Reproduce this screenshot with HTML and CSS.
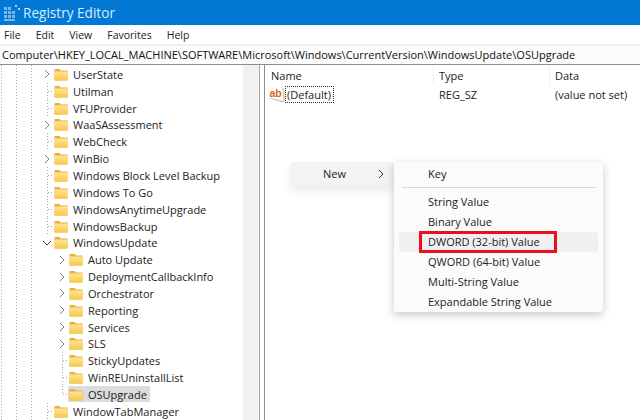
FILE: index.html
```html
<!DOCTYPE html>
<html lang="en">
<head>
<meta charset="utf-8">
<title>Registry Editor</title>
<link rel="stylesheet" href="styles.css">
</head>
<body>
<svg class="defs" width="0" height="0" aria-hidden="true">
  <defs>
    <linearGradient id="fg" x1="0" y1="0" x2="0" y2="1"><stop offset="0" stop-color="#ffe596"/><stop offset="1" stop-color="#f8c948"/></linearGradient>
    <symbol id="folder" viewBox="0 0 14 13">
      <path d="M0.5 1h5l1.5 1.5h6.5v10h-13z" fill="#e9b23c"/>
      <path d="M0.5 3.5h13v9h-13z" fill="url(#fg)"/>
    </symbol>
    <symbol id="right" viewBox="0 0 8 10"><path d="M2 1l4 4-4 4" fill="none" stroke="#808080" stroke-width="1"/></symbol>
  </defs>
</svg>
<div class="window">
  <header class="titlebar">
    <svg class="appicon" width="16" height="16" viewBox="0 0 16 16">
      <g fill="#7fb6e6"><rect x="0" y="2" width="3" height="3"/><rect x="0" y="6" width="3" height="3"/><rect x="0" y="10" width="3" height="3"/><rect x="4" y="2" width="3" height="3"/><rect x="4" y="6" width="3" height="3"/><rect x="4" y="10" width="3" height="3"/><rect x="8" y="6" width="3" height="3"/><rect x="8" y="10" width="3" height="3"/><rect x="0" y="14" width="11" height="2"/></g>
      <g fill="#a9cfef"><rect x="11" y="0" width="2" height="2"/><rect x="14" y="3" width="2" height="2"/></g>
    </svg>
    <span class="title">Registry Editor</span>
  </header>
  <nav class="menubar"><span>File</span><span>Edit</span><span>View</span><span>Favorites</span><span>Help</span></nav>
  <div class="address">Computer\HKEY_LOCAL_MACHINE\SOFTWARE\Microsoft\Windows\CurrentVersion\WindowsUpdate\OSUpgrade</div>
  <main class="panes">
    <section class="tree">
      <ul class="rows">
        <li class="row l1 arrow"><svg class="chev"><use href="#right"/></svg><svg class="fold"><use href="#folder"/></svg><span>UserState</span></li>
        <li class="row l1 leaf"><svg class="fold"><use href="#folder"/></svg><span>Utilman</span></li>
        <li class="row l1 leaf"><svg class="fold"><use href="#folder"/></svg><span>VFUProvider</span></li>
        <li class="row l1 arrow"><svg class="chev"><use href="#right"/></svg><svg class="fold"><use href="#folder"/></svg><span>WaaSAssessment</span></li>
        <li class="row l1 leaf"><svg class="fold"><use href="#folder"/></svg><span>WebCheck</span></li>
        <li class="row l1 arrow"><svg class="chev"><use href="#right"/></svg><svg class="fold"><use href="#folder"/></svg><span>WinBio</span></li>
        <li class="row l1 leaf"><svg class="fold"><use href="#folder"/></svg><span>Windows Block Level Backup</span></li>
        <li class="row l1 leaf"><svg class="fold"><use href="#folder"/></svg><span>Windows To Go</span></li>
        <li class="row l1 leaf"><svg class="fold"><use href="#folder"/></svg><span>WindowsAnytimeUpgrade</span></li>
        <li class="row l1 leaf"><svg class="fold"><use href="#folder"/></svg><span>WindowsBackup</span></li>
        <li class="row l1 arrow"><svg class="chev" viewBox="0 0 8 10"><path d="M0 3l4 4 4-4" fill="none" stroke="#444" stroke-width="1"/></svg><svg class="fold"><use href="#folder"/></svg><span>WindowsUpdate</span></li>
        <li class="row l2 arrow"><svg class="chev"><use href="#right"/></svg><svg class="fold"><use href="#folder"/></svg><span>Auto Update</span></li>
        <li class="row l2 arrow"><svg class="chev"><use href="#right"/></svg><svg class="fold"><use href="#folder"/></svg><span>DeploymentCallbackInfo</span></li>
        <li class="row l2 arrow"><svg class="chev"><use href="#right"/></svg><svg class="fold"><use href="#folder"/></svg><span>Orchestrator</span></li>
        <li class="row l2 arrow"><svg class="chev"><use href="#right"/></svg><svg class="fold"><use href="#folder"/></svg><span>Reporting</span></li>
        <li class="row l2 arrow"><svg class="chev"><use href="#right"/></svg><svg class="fold"><use href="#folder"/></svg><span>Services</span></li>
        <li class="row l2 arrow"><svg class="chev"><use href="#right"/></svg><svg class="fold"><use href="#folder"/></svg><span>SLS</span></li>
        <li class="row l2 leaf"><svg class="fold"><use href="#folder"/></svg><span>StickyUpdates</span></li>
        <li class="row l2 leaf"><svg class="fold"><use href="#folder"/></svg><span>WinREUninstallList</span></li>
        <li class="row l2 leaf last"><span class="selbox"><svg class="fold"><use href="#folder"/></svg><span>OSUpgrade</span></span></li>
        <li class="row l1 leaf"><svg class="fold"><use href="#folder"/></svg><span>WindowTabManager</span></li>
      </ul>
      <div class="scrollbar"></div>
    </section>
    <section class="list">
      <div class="cols head"><span>Name</span><span>Type</span><span>Data</span></div>
      <div class="cols item">
        <span class="namecell">
          <svg class="ab" width="16" height="17" viewBox="0 0 16 17">
            <path d="M0.5 12.5c3-.8 5 1.5 9 2l3.5 1.5 2-1V4l-2-2.500" fill="#f4f4ee" stroke="#b8b8a8" stroke-width="1"/>
            <path d="M0 2h13v11c-4 .5-8-1.500-13-.5z" fill="#fff"/>
            <text class="abtext" x="0.500" y="11">ab</text>
          </svg>
          <span class="focus">(Default)</span>
        </span>
        <span>REG_SZ</span><span>(value not set)</span>
      </div>
    </section>
  </main>
</div>
<div class="ctx">
  <div class="newitem"><span>New</span><svg class="subchev" viewBox="0 0 8 10"><path d="M2 1l4 4-4 4" fill="none" stroke="#333" stroke-width="1"/></svg></div>
  <div class="submenu">
    <div class="mi">Key</div>
    <div class="sep"></div>
    <div class="mi">String Value</div>
    <div class="mi">Binary Value</div>
    <div class="mi hot"><span class="redbox">DWORD (32-bit) Value</span></div>
    <div class="mi">QWORD (64-bit) Value</div>
    <div class="mi">Multi-String Value</div>
    <div class="mi">Expandable String Value</div>
  </div>
</div>
</body>
</html>
```
FILE: styles.css
```css
* { box-sizing: border-box; }
html, body { margin: 0; padding: 0; }
body { width: 640px; height: 420px; overflow: hidden; background: #fff; font-family: "Open Sans", "Noto Sans", sans-serif; font-size: 11px; color: #222; position: relative; }
.defs { position: absolute; }
.window { display: flex; flex-direction: column; height: 420px; }
.titlebar { height: 25px; background: #0078d4; display: flex; align-items: center; padding-left: 4px; gap: 3px; color: #dcecf9; font-size: 13.6px; flex: none; }
.menubar { height: 19px; flex: none; background: #fff; display: flex; gap: 15px; padding-left: 4px; align-items: center; font-size: 10.5px; }
.address { height: 20px; flex: none; background: #fcfcfc; border-top: 2px solid #f0f0f0; line-height: 18px; padding-left: 2px; font-size: 11px; white-space: nowrap; overflow: hidden; color: #111; }
.panes { flex: 1; display: flex; min-height: 0; border-top: 1px solid #8e8e8e; }
.tree { width: 260px; flex: none; display: flex; border-right: 1px solid #a8a8a8; }
.rows { list-style: none; margin: 0; padding: 1px 0 0; flex: 1; min-width: 0; background-image: repeating-linear-gradient(to bottom, #a8a8a8 0 1px, transparent 1px 3px), repeating-linear-gradient(to bottom, #a8a8a8 0 1px, transparent 1px 3px), repeating-linear-gradient(to bottom, #a8a8a8 0 1px, transparent 1px 3px); background-size: 1px 100%; background-repeat: no-repeat; background-position: 1px 0, 16px 0, 31px 0; }
.row { height: 16.85px; display: flex; align-items: center; white-space: nowrap; }
.l1.arrow { padding-left: 43px; }
.l2.arrow { padding-left: 58px; }
.l1.leaf { padding-left: 48px; }
.l2.leaf { padding-left: 63px; }
.chev { width: 8px; height: 10px; flex: none; }
.arrow .fold { margin-left: 3px; }
.leaf::before { content: ""; width: 6px; height: 1px; flex: none; background-image: repeating-linear-gradient(to right, #a8a8a8 0 1px, transparent 1px 3px); }
.fold { width: 14px; height: 13px; margin-right: 5px; flex: none; }
.leaf { background-image: repeating-linear-gradient(to bottom, #a8a8a8 0 1px, transparent 1px 3px); background-size: 1px 100%; background-repeat: no-repeat; }
.l1.leaf { background-position: 47px 0; }
.l2.leaf { background-position: 62px 0; }
.selbox { display: flex; align-items: center; height: 16px; background: #dcdcdc; margin-left: -1px; padding: 0 3px 0 1px; }
.last { background-size: 1px 50%; }
.scrollbar { width: 16px; background: #f1f1f1; flex: none; }
.list { flex: 1; min-width: 0; margin-left: 4px; border-left: 1px solid #8e8e8e; padding: 2px 0 0 6px; }
.cols { display: grid; grid-template-columns: 168px 116px 1fr; align-items: center; }
.head { height: 17px; }
.head span { position: relative; }
.head span + span::before { content: ""; position: absolute; left: -6px; top: -2px; width: 1px; height: 19px; background: #efefef; }
.item { height: 20px; }
.namecell { display: flex; align-items: center; }
.ab { flex: none; margin-left: -2px; }
.abtext { font-family: "Liberation Sans", sans-serif; font-weight: 700; font-size: 10.5px; fill: #d8641c; }
.focus { outline: 1px dotted #333; outline-offset: -1px; padding: 0 3px 0 2px; line-height: 17px; }
.ctx { position: absolute; left: 290px; top: 162px; width: 314px; height: 150px; display: flex; align-items: flex-start; }
.newitem { width: 104px; height: 23px; background: #f4f4f4; border-radius: 4px 0 0 4px; display: flex; align-items: center; padding-left: 33px; box-shadow: 0 6px 10px rgba(0,0,0,.08); }
.subchev { width: 8px; height: 10px; margin-left: 31px; }
.submenu { width: 209px; height: 150px; background: #fbfbfb; border-radius: 0 4px 4px 0; box-shadow: 0 3px 10px rgba(0,0,0,.22); padding-top: 2px; }
.mi { height: 20px; line-height: 20px; margin: 0 5px; padding-left: 29px; }
.sep { height: 1px; background: #d8d8d8; margin: 3px 8px 4px; }
.hot { background: #f0f0f0; border-radius: 3px; position: relative; }
.redbox { position: absolute; left: 20px; top: -1px; width: 138px; height: 22px; border: 3px solid #e8101e; padding-left: 6px; line-height: 16px; }
```
